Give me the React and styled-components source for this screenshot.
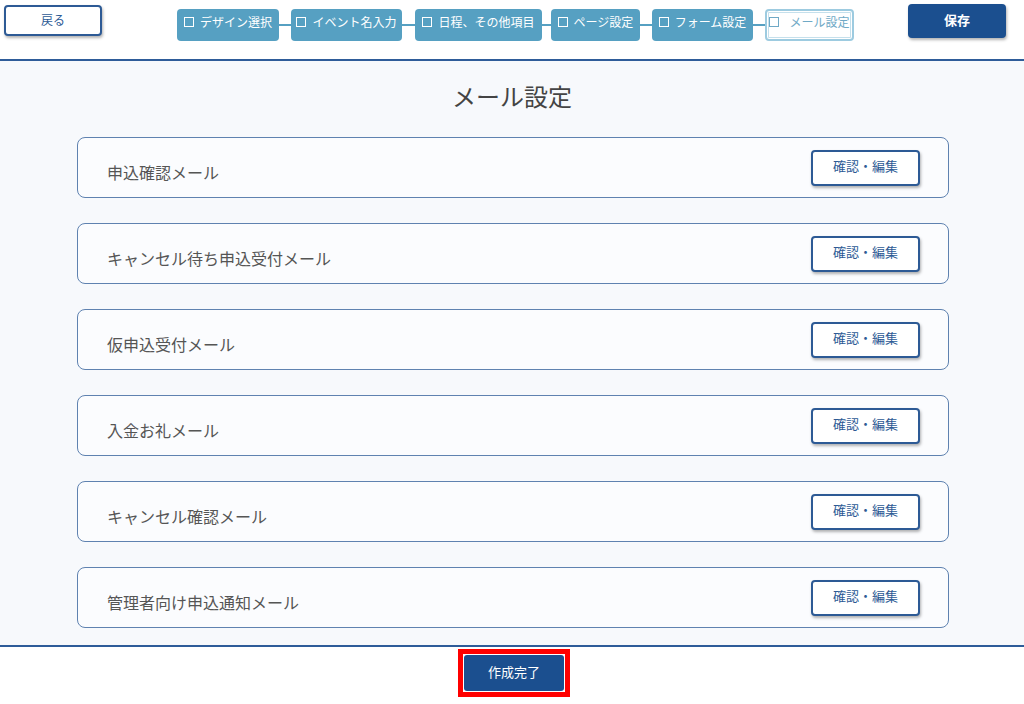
import React from 'react';
import styled, { createGlobalStyle } from 'styled-components';

const GlobalStyle = createGlobalStyle`
    body {
        margin: 0;
        background: #ffffff;
        font-family: "Noto Sans CJK JP", "Noto Sans", sans-serif;
    }
`

const Page = styled.div`
    width: 1024px;
    height: 704px;
    overflow: hidden;
`

const Header = styled.div`
    display: flex;
    align-items: flex-start;
    height: 59px;
    border-bottom: 2px solid #2e5c99;
    background: #ffffff;
`

const BackButton = styled.button`
    margin: 5px 0 0 4px;
    width: 98px;
    height: 31px;
    background: #ffffff;
    border: 2px solid #2d5a95;
    border-radius: 4px;
    box-shadow: 1px 2px 3px rgba(0, 0, 0, 0.3);
    color: #2d5a95;
    font-family: inherit;
    font-size: 12px;
    padding: 0 0 3px;
    cursor: pointer;
`

const Steps = styled.div`
    display: flex;
    align-items: center;
    margin: 9px 0 0 75px;
`

const Step = styled.div`
    display: flex;
    align-items: center;
    justify-content: center;
    box-sizing: border-box;
    width: ${p => p.w}px;
    height: 32px;
    padding-bottom: 7px;
    border-radius: 4px;
    font-size: 12px;
    white-space: nowrap;
    background: ${p => (p.active ? '#ffffff' : '#56a0c2')};
    color: ${p => (p.active ? '#6fa9c6' : '#ffffff')};
    border: ${p => (p.active ? '2px solid #9dcbe0' : 'none')};
    box-shadow: ${p => (p.active ? 'inset 0 0 0 1px #ffffff, inset 0 0 0 2px #c5e0ec' : 'none')};
`

const Box = styled.span`
    display: inline-block;
    width: 8px;
    height: 8px;
    border: 1.5px solid currentColor;
    margin-right: ${p => (p.active ? '10px' : '6px')};
`

const Connector = styled.div`
    width: ${p => p.w}px;
    height: 2px;
    background: #56a0c2;
`

const SaveButton = styled.button`
    margin: 4px 0 0 54px;
    width: 98px;
    height: 34px;
    background: #1b4f8f;
    border: none;
    border-radius: 4px;
    box-shadow: 1px 2px 3px rgba(0, 0, 0, 0.3);
    color: #ffffff;
    font-family: inherit;
    font-size: 13px;
    font-weight: bold;
    padding: 0 0 4px;
`

const Main = styled.div`
    height: 586px;
    background: #f7f9fc;
    border-bottom: 2px solid #2e5c99;
    padding: 20px 0 0;
    box-sizing: border-box;
`

const Title = styled.h1`
    margin: 0 0 26px;
    text-align: center;
    font-size: 24px;
    line-height: 30px;
    font-weight: normal;
    color: #444444;
`

const CardList = styled.div`
    display: flex;
    flex-direction: column;
    gap: 25px;
    margin: 0 75px 0 77px;
`

const Card = styled.div`
    display: flex;
    align-items: center;
    justify-content: space-between;
    box-sizing: border-box;
    height: 61px;
    padding: 0 28px 0 29px;
    background: #fbfcfe;
    border: 1px solid #5f82b0;
    border-radius: 8px;
`

const Label = styled.span`
    font-size: 16px;
    color: #555555;
    padding-top: 8px;
`

const EditButton = styled.button`
    width: 109px;
    height: 36px;
    background: #ffffff;
    border: 2px solid #2d5a95;
    border-radius: 4px;
    box-shadow: 1px 2px 3px rgba(0, 0, 0, 0.3);
    color: #2d5a95;
    font-family: inherit;
    font-size: 13px;
    padding: 0 0 4px;
`

const Footer = styled.div`
    display: flex;
    justify-content: center;
    padding-top: 2px;
`

const Highlight = styled.div`
    border: 5px solid #ff0000;
    padding: 1px;
    margin-left: 4px;
`

const DoneButton = styled.button`
    display: block;
    width: 100px;
    height: 36px;
    background: #1b4f8f;
    border: none;
    border-radius: 3px;
    color: #ffffff;
    font-family: inherit;
    font-size: 13px;
    padding: 0 0 4px;
`

const steps = [
    { label: 'デザイン選択', w: 102 },
    { label: 'イベント名入力', w: 111, gap: 12 },
    { label: '日程、その他項目', w: 127, gap: 13 },
    { label: 'ページ設定', w: 89, gap: 9 },
    { label: 'フォーム設定', w: 101, gap: 12 },
    { label: 'メール設定', w: 89, gap: 12, active: true },
]

const mails = [
    '申込確認メール',
    'キャンセル待ち申込受付メール',
    '仮申込受付メール',
    '入金お礼メール',
    'キャンセル確認メール',
    '管理者向け申込通知メール',
]

const App = () => {
    return (
        <Page>
            <GlobalStyle />
            <Header>
                <BackButton>戻る</BackButton>
                <Steps>
                    {steps.map((s, i) => (
                        <React.Fragment key={s.label}>
                            {i > 0 && <Connector w={s.gap} />}
                            <Step w={s.w} active={s.active}>
                                <Box active={s.active} />
                                {s.label}
                            </Step>
                        </React.Fragment>
                    ))}
                </Steps>
                <SaveButton>保存</SaveButton>
            </Header>
            <Main>
                <Title>メール設定</Title>
                <CardList>
                    {mails.map(m => (
                        <Card key={m}>
                            <Label>{m}</Label>
                            <EditButton>確認・編集</EditButton>
                        </Card>
                    ))}
                </CardList>
            </Main>
            <Footer>
                <Highlight>
                    <DoneButton>作成完了</DoneButton>
                </Highlight>
            </Footer>
        </Page>
    );
};

export default App;
